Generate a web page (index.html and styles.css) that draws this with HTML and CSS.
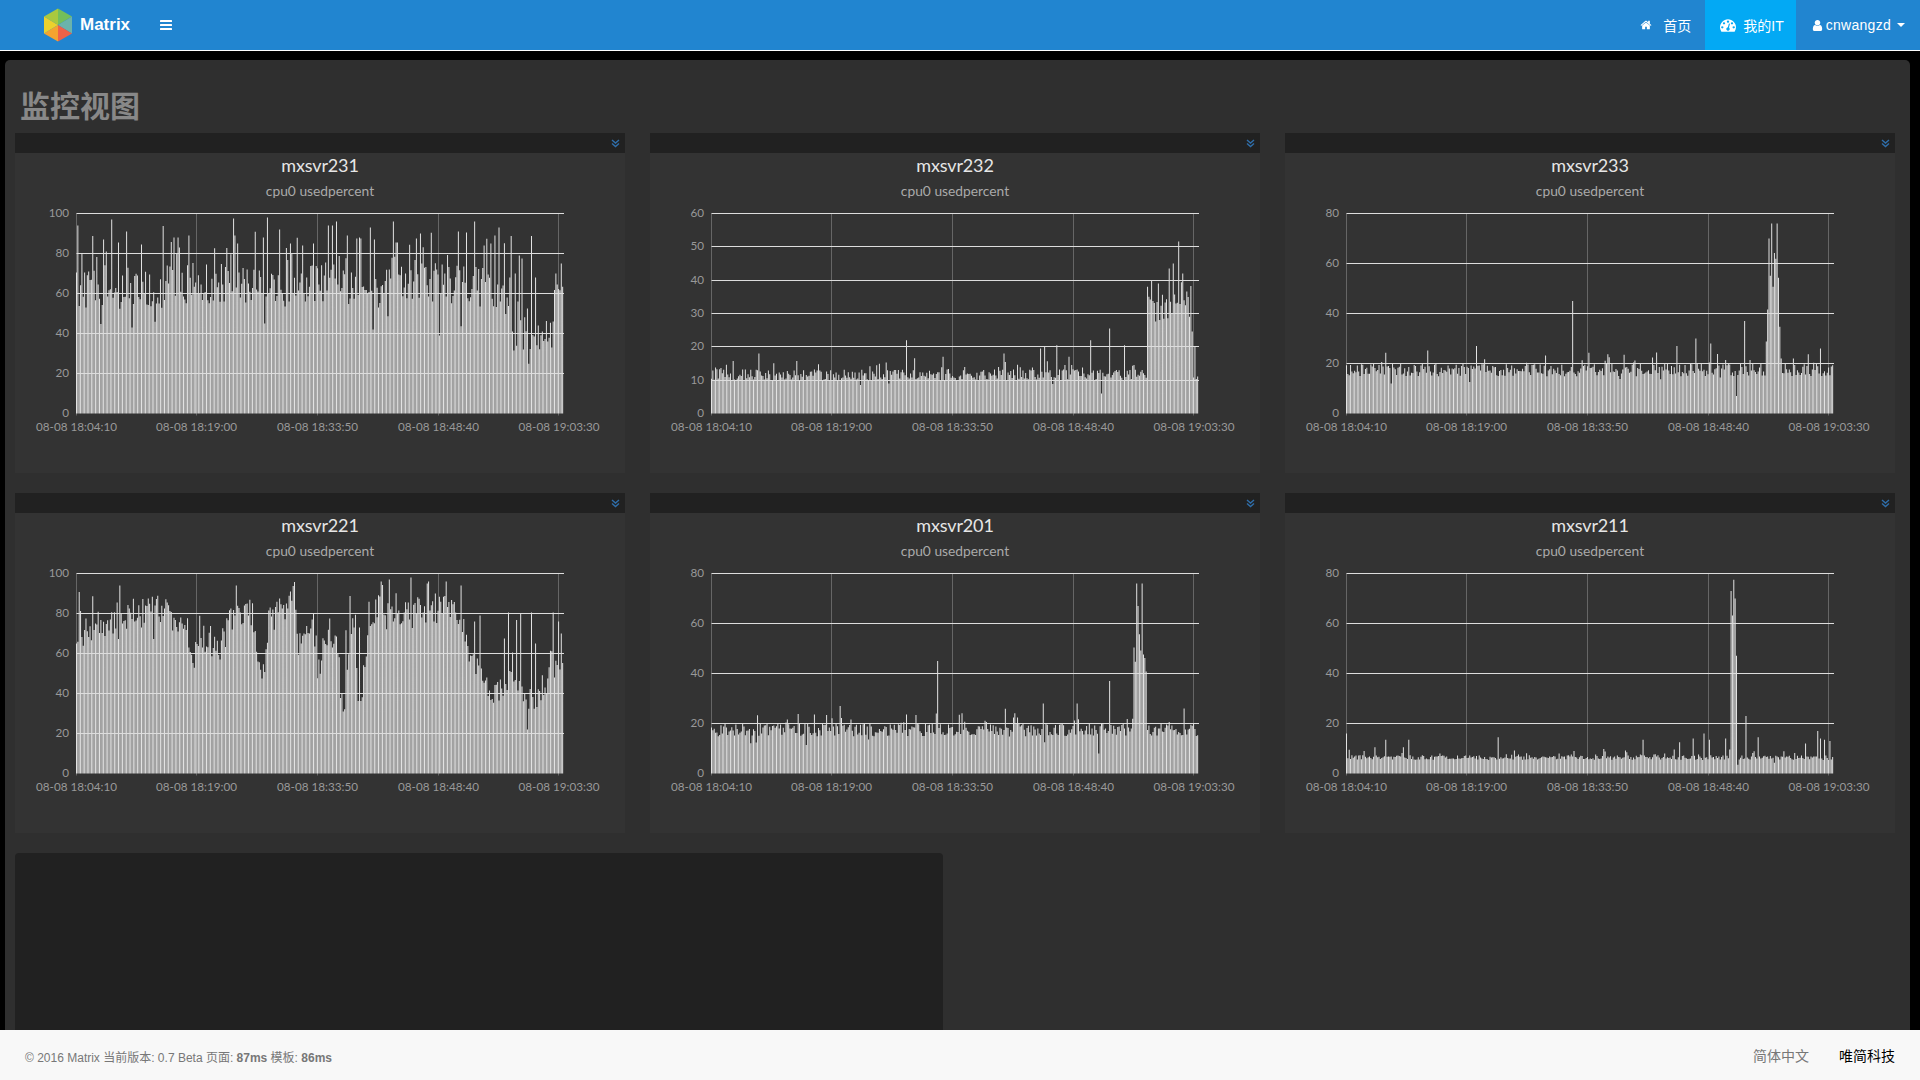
FILE: index.html
```html
<!DOCTYPE html>
<html lang="zh-CN">
<head>
<meta charset="utf-8">
<title>监控视图 - Matrix</title>
<link rel="stylesheet" href="styles.css">
</head>
<body>
<div class="app">
  <header class="navbar">
    <a class="brand">
      <svg class="logo" viewBox="0 0 30 34" width="30" height="34">
        <polygon points="15,17 15,0.5 1,8.5" fill="#a9c93f"/>
        <polygon points="15,17 15,0.5 29,8.5" fill="#74bf5b"/>
        <polygon points="15,17 29,8.5 29,25.5" fill="#6bb3ab"/>
        <polygon points="15,17 29,25.5 15,33.5" fill="#ef6248"/>
        <polygon points="15,17 15,33.5 1,25.5" fill="#f5a32f"/>
        <polygon points="15,17 1,25.5 1,8.5" fill="#ecd12c"/>
      </svg>
      <span class="brand-name">Matrix</span>
    </a>
    <svg class="menu-toggle" viewBox="0 0 12 10" width="12" height="10">
      <rect width="12" height="2" y="0" rx="0.5"/><rect width="12" height="2" y="4" rx="0.5"/><rect width="12" height="2" y="8" rx="0.5"/>
    </svg>
    <nav class="nav-right">
      <a class="nav-link home">
        <svg class="nav-icon" viewBox="0 0 1792 1792" width="12" height="12"><path d="M1472 992v480q0 26-19 45t-45 19h-384v-384h-256v384h-384q-26 0-45-19t-19-45v-480q0-1 .5-3t.5-3l575-474 575 474q1 2 1 6zm223-69l-62 74q-8 9-21 11h-3q-13 0-21-7l-692-577-692 577q-12 8-24 7-13-2-21-11l-62-74q-8-10-7-23.500t11-21.500l719-599q32-26 76-26t76 26l244 204v-195q0-14 9-23t23-9h192q14 0 23 9t9 23v408l219 182q10 8 11 21.500t-7 23.500z"/></svg>
        <span>首页</span>
      </a>
      <a class="nav-link active">
        <svg class="nav-icon gauge" viewBox="0 0 1792 1792" width="16" height="16"><path fill-rule="evenodd" d="M384 1152q0-53-37.500-90.500t-90.500-37.500-90.500 37.500-37.500 90.500 37.500 90.500 90.500 37.500 90.500-37.500 37.500-90.500zm192-448q0-53-37.500-90.500t-90.500-37.500-90.500 37.500-37.500 90.500 37.500 90.500 90.500 37.500 90.500-37.500 37.500-90.500zm428 481l101-382q6-26-7.500-48.500t-38.500-29.500-48 6.500-30 39.500l-101 382q-60 5-107 43.500t-63 98.500q-20 77 20 146t117 89 146-20 89-117q16-60-6-117t-72-91zm660-33q0-53-37.500-90.500t-90.500-37.500-90.500 37.500-37.500 90.500 37.500 90.500 90.500 37.500 90.500-37.500 37.500-90.500zm-640-640q0-53-37.500-90.500t-90.500-37.500-90.500 37.500-37.500 90.500 37.500 90.500 90.500 37.500 90.500-37.500 37.500-90.500zm448 192q0-53-37.500-90.500t-90.500-37.500-90.500 37.500-37.500 90.500 37.500 90.500 90.500 37.500 90.500-37.500 37.500-90.500zm320 448q0 261-141 483-19 29-54 29h-1402q-35 0-54-29-141-221-141-483 0-182 71-348t191-286 286-191 348-71 348 71 286 191 191 286 71 348z"/></svg>
        <span>我的IT</span>
      </a>
      <a class="nav-link user">
        <svg class="nav-icon" viewBox="0 0 1792 1792" width="13" height="13"><path d="M1536 1399q0 109-62.500 187t-150.500 78h-854q-88 0-150.500-78t-62.500-187q0-85 8.500-160.500t31.500-152 58.500-131 94-89 134.500-34.500q131 128 313 128t313-128q76 0 134.500 34.500t94 89 58.500 131 31.500 152 8.500 160.500zm-256-887q0 159-112.500 271.500t-271.500 112.500-271.500-112.500-112.500-271.500 112.500-271.500 271.500-112.500 271.500 112.500 112.500 271.500z"/></svg>
        <span class="user-name">cnwangzd</span>
        <i class="caret"></i>
      </a>
    </nav>
  </header>

  <main class="main">
    <h1 class="page-title">监控视图</h1>
    <section class="grid">
      <article class="card">
        <div class="card-head"><svg class="chevrons" viewBox="0 0 9 9" width="9" height="9"><path d="M1 1l3.500 3L8 1M1 4.500l3.500 3L8 4.500"/></svg></div>
        <h2 class="card-title">mxsvr231</h2>
        <p class="card-sub">cpu0 usedpercent</p>
        <svg class="chart" data-chart="mxsvr231" width="610" height="273"></svg>
      </article>
      <article class="card">
        <div class="card-head"><svg class="chevrons" viewBox="0 0 9 9" width="9" height="9"><path d="M1 1l3.500 3L8 1M1 4.500l3.500 3L8 4.500"/></svg></div>
        <h2 class="card-title">mxsvr232</h2>
        <p class="card-sub">cpu0 usedpercent</p>
        <svg class="chart" data-chart="mxsvr232" width="610" height="273"></svg>
      </article>
      <article class="card">
        <div class="card-head"><svg class="chevrons" viewBox="0 0 9 9" width="9" height="9"><path d="M1 1l3.500 3L8 1M1 4.500l3.500 3L8 4.500"/></svg></div>
        <h2 class="card-title">mxsvr233</h2>
        <p class="card-sub">cpu0 usedpercent</p>
        <svg class="chart" data-chart="mxsvr233" width="610" height="273"></svg>
      </article>
      <article class="card">
        <div class="card-head"><svg class="chevrons" viewBox="0 0 9 9" width="9" height="9"><path d="M1 1l3.500 3L8 1M1 4.500l3.500 3L8 4.500"/></svg></div>
        <h2 class="card-title">mxsvr221</h2>
        <p class="card-sub">cpu0 usedpercent</p>
        <svg class="chart" data-chart="mxsvr221" width="610" height="273"></svg>
      </article>
      <article class="card">
        <div class="card-head"><svg class="chevrons" viewBox="0 0 9 9" width="9" height="9"><path d="M1 1l3.500 3L8 1M1 4.500l3.500 3L8 4.500"/></svg></div>
        <h2 class="card-title">mxsvr201</h2>
        <p class="card-sub">cpu0 usedpercent</p>
        <svg class="chart" data-chart="mxsvr201" width="610" height="273"></svg>
      </article>
      <article class="card">
        <div class="card-head"><svg class="chevrons" viewBox="0 0 9 9" width="9" height="9"><path d="M1 1l3.500 3L8 1M1 4.500l3.500 3L8 4.500"/></svg></div>
        <h2 class="card-title">mxsvr211</h2>
        <p class="card-sub">cpu0 usedpercent</p>
        <svg class="chart" data-chart="mxsvr211" width="610" height="273"></svg>
      </article>
    </section>
    <div class="dark-block"></div>
  </main>

  <footer class="footer">
    <p class="footer-info">© 2016 Matrix 当前版本: 0.7 Beta 页面: <b>87ms</b> 模板: <b>86ms</b></p>
    <div class="footer-links">
      <a class="footer-lang">简体中文</a>
      <a class="footer-co">唯简科技</a>
    </div>
  </footer>
</div>
<script src="charts.js"></script>
</body>
</html>
```

FILE: styles.css
```css
* { box-sizing: border-box; }
html, body { height: 100%; margin: 0; }
body {
  background: #000;
  overflow: hidden;
  font-family: "Liberation Sans", "Noto Sans CJK SC", sans-serif;
}
.app { display: flex; flex-direction: column; height: 100vh; }

/* navbar */
.navbar {
  flex: none;
  height: 51px;
  display: flex;
  align-items: center;
  background: #2185d0;
  border-bottom: 1px solid #fff;
  padding-left: 43px;
}
.brand { display: flex; align-items: center; gap: 7px; color: #fff; }
.logo { display: block; }
.brand-name { font-size: 17px; font-weight: 700; }
.menu-toggle { fill: #fff; margin-left: 30px; display: block; }
.nav-right { margin-left: auto; display: flex; height: 50px; }
.nav-link {
  display: flex;
  align-items: center;
  color: #fff;
  font-size: 14px;
}
.nav-link.home { gap: 11px; padding: 0 14px 0 15px; }
.nav-link.active { background: #03a9f4; gap: 7px; padding: 0 12px 0 15px; }
.nav-link.user { gap: 2px; padding: 0 15px; }
.user-name { letter-spacing: .28px; }
.nav-icon { fill: #fff; display: block; }
.caret {
  width: 0;
  height: 0;
  margin-left: 4px;
  border-left: 4px solid transparent;
  border-right: 4px solid transparent;
  border-top: 4px solid #fff;
}

/* main */
.main {
  flex: 1;
  min-height: 0;
  margin: 9px 10px 0 5px;
  padding: 26px 15px 0 10px;
  background: #2f2f2f;
  border-radius: 5px 5px 0 0;
  overflow: hidden;
}
.page-title {
  margin: 0 0 11px 5px;
  font-size: 30px;
  line-height: 36px;
  font-weight: 700;
  color: #888;
  font-family: "Noto Sans CJK SC", sans-serif;
}
.grid {
  display: grid;
  grid-template-columns: repeat(3, 610px);
  column-gap: 25px;
  row-gap: 20px;
}
.card { background: #333; height: 340px; }
.card-head {
  height: 20px;
  background: #212121;
  display: flex;
  justify-content: flex-end;
  align-items: center;
  padding-right: 5px;
}
.chevrons { fill: none; stroke: #2f6eaa; stroke-width: 1.4; display: block; }
.card-title {
  margin: 0;
  text-align: center;
  font: 400 18px/24px Lato, sans-serif;
  letter-spacing: -.15px;
  color: #e6e6e6;
}
.card-sub {
  margin: 6px 0 0;
  text-align: center;
  font: 400 13.8px/16px Lato, sans-serif;
  color: #aaa;
}
.chart { display: block; margin-top: 1px; }
.bars { fill: #e2e2e2; }
.hline { stroke: #ddd; stroke-width: 1; }
.vline { stroke: #666; stroke-width: 1; }
.axis-y, .axis-x { fill: #999; font: 400 11.7px Lato, sans-serif; dominant-baseline: central; }
.axis-y { text-anchor: end; }
.axis-x { text-anchor: middle; }
.dark-block {
  width: 928px;
  height: 300px;
  margin-top: 20px;
  background: #212121;
  border-radius: 4px;
}

/* footer */
.footer {
  flex: none;
  height: 50px;
  background: #f8f8f8;
  display: flex;
  align-items: center;
  justify-content: space-between;
  padding: 2px 25px 0;
}
.footer-info { margin: 0; font-size: 12px; color: #777; }
.footer-links { display: flex; gap: 30px; font-size: 14px; margin-top: -2px; }
.footer-lang { color: #777; }
.footer-co { color: #000; }
```

FILE: charts.js
```js
(function () {
  var NS = "http://www.w3.org/2000/svg";
  var LEFT = 61.5, WIDTH = 487.5, TOP = 13.5, BOTTOM = 213.5, N = 360, STEP = WIDTH / N;
  var TICKS = [61.5, 181.5, 302.5, 423.5, 543.5];
  var TIMES = ["08-08 18:04:10", "08-08 18:19:00", "08-08 18:33:50", "08-08 18:48:40", "08-08 19:03:30"];

  var CHARTS = {
    mxsvr231: {
      max: 100, step: 20, seed: 11, range: [187, 1382], noise: 20, rel: 0, p: .28, spike: 24, q: .05, drop: 14,
      base: [[187, 62], [400, 62], [560, 66], [700, 62], [800, 66], [900, 62], [1050, 66], [1250, 62], [1258, 34], [1300, 34], [1320, 39], [1360, 39], [1366, 65], [1382, 65]],
      spikes: [[191, 94], [275, 97], [400, 93.7], [573, 97.5], [656, 98], [805, 94], [825, 96], [908, 93], [965, 96], [1167, 96], [1227, 93], [1255, 88.7], [1306, 88.7], [1316, 68], [1297, 52.5], [1358, 46], [1380, 75], [227, 88.7], [254, 87], [311, 91], [347, 84.5], [427, 88], [437, 88], [463, 89], [575, 89], [583, 85], [645, 88], [686, 92], [712, 85], [743, 84], [770, 85], [815, 94], [852, 89], [882, 88], [918, 87], [975, 85.5], [1021, 87.5], [1031, 90], [1127, 91], [1145, 90.5], [1188, 84], [1207, 85], [1217, 89], [1275, 79], [1283, 77.5], [1264, 70], [325, 43], [1080, 39], [915, 42], [650, 45]]
    },
    mxsvr232: {
      max: 60, step: 10, seed: 23, range: [175, 1370], noise: 0, rel: .3, p: .16, spike: 4.5, q: .03, drop: 3,
      base: [[175, 11.5], [1000, 11.5], [1246, 11.5], [1250, 31], [1290, 32], [1340, 36], [1355, 36], [1358, 11], [1370, 11]],
      spikes: [[654, 22], [743, 17], [893, 18], [985, 19.5], [993, 20], [1025, 20.5], [1055, 17], [1108, 22], [1132, 20], [1135, 6], [1155, 25.5], [1190, 20.5], [1365, 20], [1325, 51.6], [1311, 45], [1300, 43.5], [1335, 42], [1258, 40], [1248, 38], [1275, 39], [1351, 29], [291, 18]]
    },
    mxsvr233: {
      max: 80, step: 20, seed: 37, range: [1099, 1497], noise: 0, rel: .3, p: .14, spike: 6, q: .04, drop: 5,
      base: [[1099, 17.5], [1442, 17.5], [1444, 50], [1448, 58], [1453, 52], [1455, 17.5], [1497, 17.5]],
      spikes: [[1284, 45], [1447, 76], [1451, 76], [1205, 27], [1370, 27], [1385, 30], [1397, 28], [1425, 37], [1487, 26], [1445, 70], [1418, 7]]
    },
    mxsvr221: {
      max: 100, step: 20, seed: 41, range: [187, 1382], noise: 16, rel: 0, p: .09, spike: 10, q: .03, drop: 10,
      base: [[187, 70], [300, 80], [400, 82], [460, 74], [470, 60], [490, 68], [540, 64], [580, 82], [625, 78], [632, 55], [650, 52], [660, 76], [700, 84], [725, 84], [730, 65], [770, 78], [780, 53], [800, 68], [830, 68], [838, 33], [850, 33], [858, 72], [872, 78], [878, 36], [890, 40], [900, 72], [930, 88], [960, 84], [1000, 80], [1100, 84], [1130, 80], [1155, 58], [1195, 50], [1203, 39], [1260, 47], [1290, 38], [1297, 25], [1305, 40], [1340, 42], [1350, 55], [1382, 56]],
      spikes: [[192, 90.7], [294, 94], [580, 94], [713, 91], [935, 96], [955, 97], [1010, 98], [1050, 95], [1097, 96], [1131, 94], [1180, 79], [1250, 80.5], [1280, 80], [1305, 80.5], [1270, 76.7], [1316, 65], [1358, 80.5], [1373, 76], [1167, 76], [1240, 67.5], [860, 88.7], [848, 71.6], [882, 73], [1380, 70], [1297, 22], [842, 31]]
    },
    mxsvr201: {
      max: 80, step: 20, seed: 53, range: [581, 979], noise: 0, rel: .3, p: .14, spike: 6, q: .04, drop: 5,
      base: [[581, 17.5], [925, 17.5], [927, 50], [931, 58], [936, 50], [938, 17.5], [979, 17.5]],
      spikes: [[766, 45], [929, 76], [933, 76], [686, 27], [853, 28], [880, 28], [907, 37], [968, 26], [898, 8]]
    },
    mxsvr211: {
      max: 80, step: 20, seed: 67, range: [163, 1357], noise: 0, rel: .3, p: .12, spike: 2.5, q: .02, drop: 1.5,
      base: [[163, 6.4], [1104, 6.4], [1107, 58], [1120, 58], [1123, 6.4], [1357, 6.4]],
      spikes: [[163, 16], [535, 14.5], [890, 13.5], [258, 13.5], [315, 13.5], [1042, 16], [1055, 13.5], [1013, 14], [980, 12.5], [1095, 14], [1175, 14.5], [1322, 17], [1326, 14], [1338, 13.5], [1352, 13], [1292, 12], [205, 9], [302, 10.5], [233, 10.5], [1106, 73], [1113, 77.5], [1117, 70], [1143, 23], [1123, 3.5]]
    }
  };

  function rng(seed) {
    var s = seed * 2654435761 >>> 0;
    return function () {
      s ^= s << 13; s >>>= 0;
      s ^= s >>> 17;
      s ^= s << 5; s >>>= 0;
      return s / 4294967296;
    };
  }

  function interp(pts, x) {
    for (var i = 1; i < pts.length; i++) {
      if (x <= pts[i][0]) {
        var a = pts[i - 1], b = pts[i];
        return a[1] + (b[1] - a[1]) * (x - a[0]) / (b[0] - a[0]);
      }
    }
    return pts[pts.length - 1][1];
  }

  function series(c) {
    var r = rng(c.seed), out = [], x0 = c.range[0], span = c.range[1] - x0;
    for (var i = 0; i < N; i++) {
      var b0 = interp(c.base, x0 + span * i / (N - 1));
      var v = b0 + (r() - .5) * (c.noise + c.rel * b0);
      var a = r(), b = r();
      if (a < c.p) v += b * c.spike;
      else if (a > 1 - c.q) v -= b * c.drop;
      out.push(Math.min(v, c.max * .96));
    }
    c.spikes.forEach(function (s) {
      out[Math.max(0, Math.min(N - 1, Math.round((s[0] - x0) / span * (N - 1))))] = s[1];
    });
    return out;
  }

  function el(parent, name, attrs, text) {
    var e = document.createElementNS(NS, name);
    for (var k in attrs) e.setAttribute(k, attrs[k]);
    if (text !== undefined) e.textContent = text;
    parent.appendChild(e);
    return e;
  }

  document.querySelectorAll(".chart").forEach(function (svg) {
    var c = CHARTS[svg.getAttribute("data-chart")], h = BOTTOM - TOP;
    TICKS.forEach(function (x, i) {
      el(svg, "line", { "class": "vline", x1: x, x2: x, y1: TOP, y2: BOTTOM + 2 });
      el(svg, "text", { "class": "axis-x", x: i === 4 ? x + .5 : x, y: BOTTOM + 12 }, TIMES[i]);
    });
    var d = series(c).map(function (v, i) {
      var x = (LEFT - .5 + i * STEP).toFixed(2), y = (BOTTOM - v / c.max * h).toFixed(1);
      return "M" + x + " " + BOTTOM + "V" + y + "h1V" + BOTTOM + "z";
    }).join("");
    el(svg, "path", { "class": "bars", d: d });
    for (var v = 0; v <= c.max; v += c.step) {
      var y = Math.round(BOTTOM - v / c.max * h - .5) + .5;
      if (v > 0) el(svg, "line", { "class": "hline", x1: LEFT, x2: LEFT + WIDTH, y1: y, y2: y });
      el(svg, "text", { "class": "axis-y", x: 54, y: y - 1.5 }, v);
    }
  });
})();
```
